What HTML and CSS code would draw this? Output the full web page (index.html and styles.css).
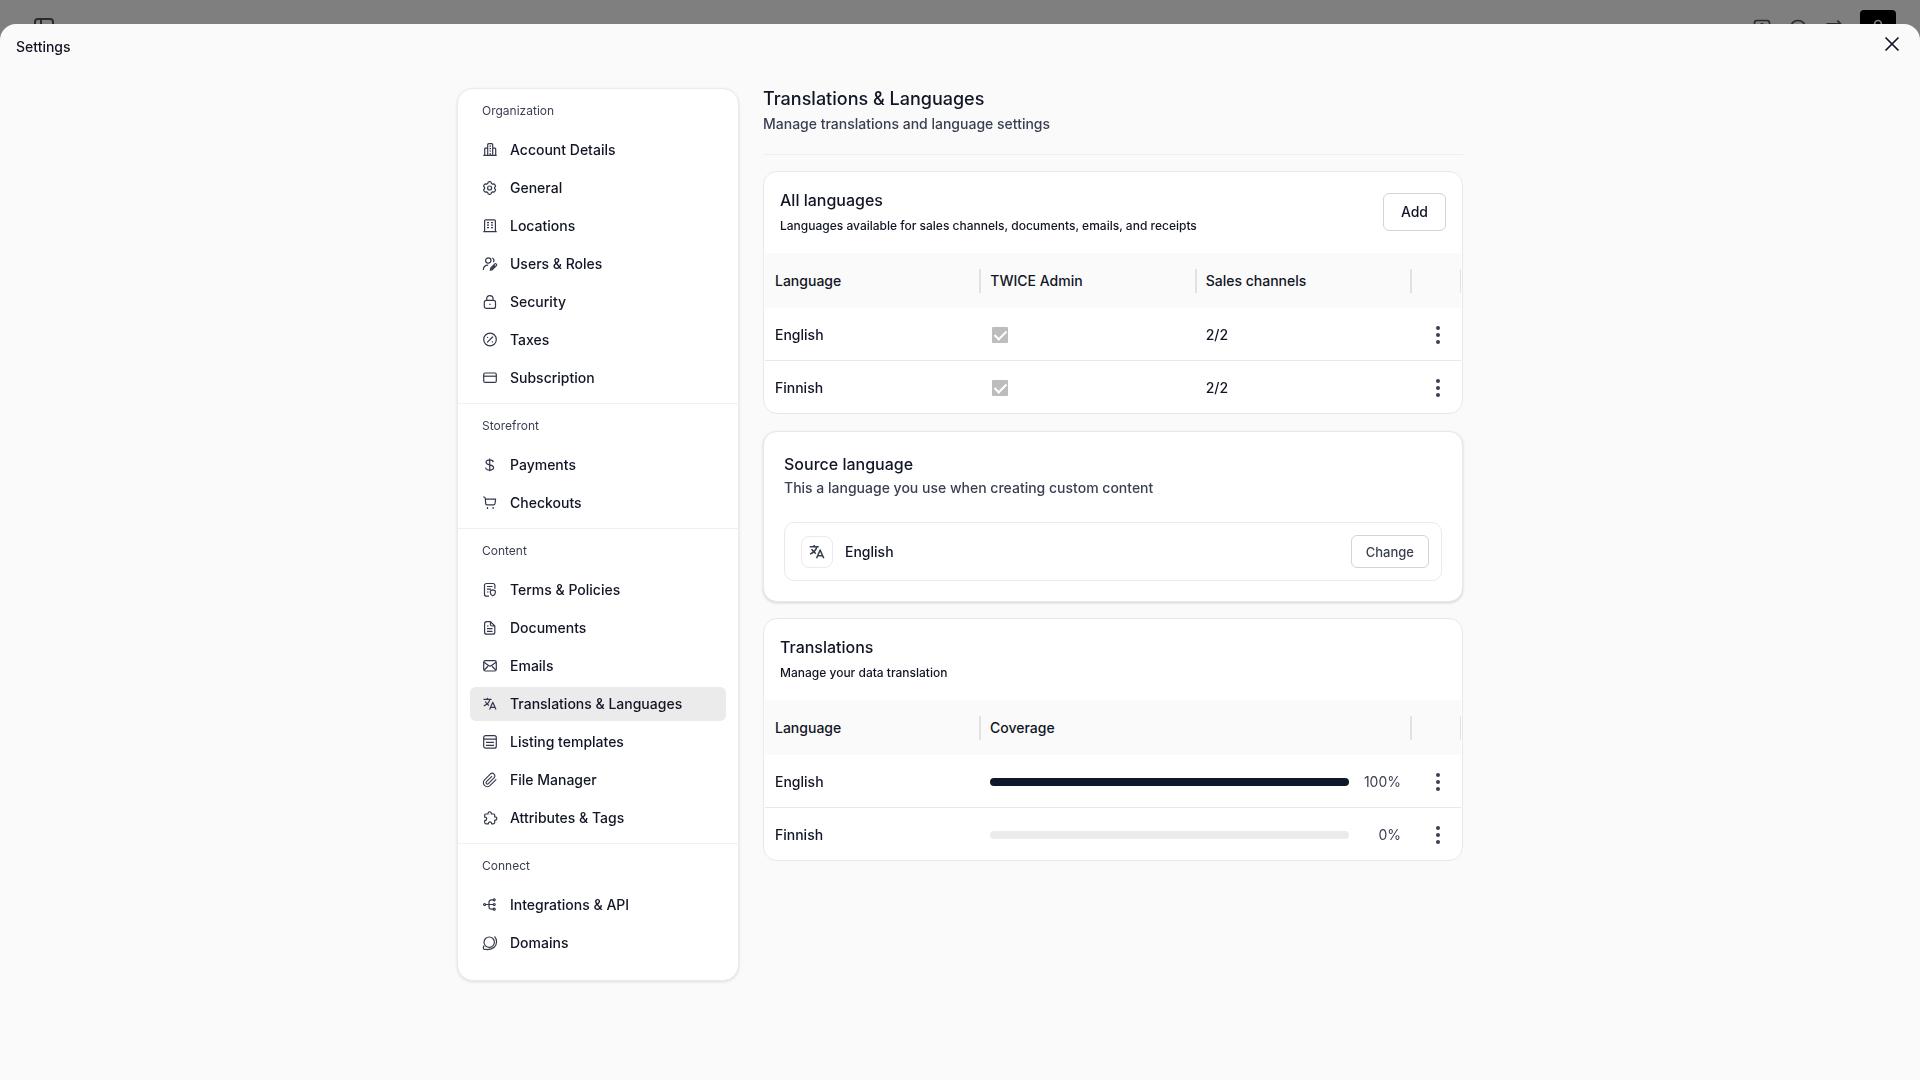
FILE: index.html
```html
<!DOCTYPE html>
<html lang="en">
  <head>
    <meta charset="utf-8">
    <meta name="viewport" content="width=device-width, initial-scale=1">
    <title>Settings - Translations &amp; Languages</title>
    <link rel="stylesheet" href="styles.css">
  </head>
  <body>
    <svg class="sprite" aria-hidden="true">
      <symbol id="translate" viewBox="0 0 16 16">
        <path d="M1.5 3.4h8M5.5 1.8v1.6M7.9 3.4C7.2 6 5 8.6 1.8 9.9M3.3 5.4c.8 1.7 2 3 3.7 4M7.6 13.6l3.2-7.4 3.2 7.4M8.6 11.4H13"/>
      </symbol>
      <symbol id="dots" viewBox="0 0 24 24">
        <circle cx="12" cy="5" r="2"/>
        <circle cx="12" cy="12" r="2"/>
        <circle cx="12" cy="19" r="2"/>
      </symbol>
    </svg>

    <header class="topbar">
      <button class="icon-btn" aria-label="Toggle sidebar">
        <svg width="24" height="24" viewBox="0 0 24 24"><rect x="3" y="3" width="18" height="18" rx="3"/><path d="M9 3v18"/></svg>
      </button>
      <div class="topbar-actions">
        <button class="icon-btn" aria-label="Contacts">
          <svg width="20" height="20" viewBox="0 0 24 24"><rect x="3" y="3" width="18" height="18" rx="3"/><circle cx="12" cy="9" r="2"/><path d="M8 17c0-3 8-3 8 0"/></svg>
        </button>
        <button class="icon-btn" aria-label="Help">
          <svg width="20" height="20" viewBox="0 0 24 24"><circle cx="12" cy="12" r="9"/><path d="M12 8v.5M12 12v4"/></svg>
        </button>
        <button class="icon-btn" aria-label="Switch">
          <svg width="20" height="20" viewBox="0 0 24 24"><path d="M3 7h17M16 3l4 4-4 4M21 17H4M8 13l-4 4 4 4"/></svg>
        </button>
        <button class="account-btn" aria-label="Account">
          <svg width="20" height="20" viewBox="0 0 24 24"><circle cx="12" cy="7" r="4"/><path d="M5 21c0-8 14-8 14 0"/></svg>
        </button>
      </div>
    </header>

    <div class="backdrop"></div>

    <div class="modal" role="dialog" aria-labelledby="modal-title">
      <header class="modal-header">
        <h1 id="modal-title">Settings</h1>
        <button class="close" aria-label="Close">
          <svg width="24" height="24" viewBox="0 0 24 24"><path d="M5.500 5.500l13 13M18.500 5.500l-13 13"/></svg>
        </button>
      </header>

      <div class="layout">
        <nav class="sidebar">
          <section>
            <h2>Organization</h2>
            <a href="#account">
              <svg viewBox="0 0 16 16"><path d="M1.300 13.300h13.400M5.700 13.300V2.700c0-.6.3-1 1-1h3c.6 0 1 .4 1 1v10.600M5.700 6.200H3.500c-.5 0-.8.3-.8.8v6.300M10.700 6.200h2c.6 0 1 .3 1 .8v6.300M7.500 4.200h1.500M7.500 6.600h1.500M7.500 9h1.500M8.200 11v2.300"/></svg>
              Account Details
            </a>
            <a href="#general">
              <svg viewBox="0 0 16 16"><circle cx="7.600" cy="8" r="2"/><path d="M6.200 2.100c.9-.5 1.900-.5 2.800 0l.5 1.400 1.100.6 1.500-.2c.9.6 1.400 1.400 1.500 2.400l-1 1.100v1.200l1 1.100c-.1 1-.6 1.800-1.500 2.400l-1.500-.2-1.100.6L9 13.900c-.9.5-1.900.5-2.800 0l-.5-1.400-1.100-.6-1.500.2c-.9-.6-1.400-1.400-1.500-2.400l1-1.100V7.400l-1-1.100c.1-1 .6-1.800 1.500-2.400l1.500.2 1.100-.6z"/></svg>
              General
            </a>
            <a href="#locations">
              <svg viewBox="0 0 16 16"><path d="M1.300 13.600h13.400M2.600 13.600V3c0-.7.4-1.100 1.100-1.100h8.600c.7 0 1.100.4 1.100 1.100v10.600"/><path d="M5 4.700h2M9 4.700h2M5 7.200h2M9 7.200h2M5 9.700h2M9 9.700h2"/></svg>
              Locations
            </a>
            <a href="#users">
              <svg viewBox="0 0 16 16"><circle cx="6.300" cy="4.500" r="2.700"/><path d="M1.300 14c0-3.300 2-5 4.900-4.900M10.300 2c1.500.8 2 2.500 1.200 4.200M8.300 14.300l.5-2.400 4-4c1-.8 2.500.7 1.600 1.700l-4 4zM9.500 12.800l3.500-3.500"/></svg>
              Users &amp; Roles
            </a>
            <a href="#security">
              <svg viewBox="0 0 16 16"><rect x="2.300" y="6.400" width="11.200" height="8" rx="2"/><path d="M4.700 6.400V5c0-4.400 6.400-4.400 6.400 0v1.400M7.900 9.700v1.400"/></svg>
              Security
            </a>
            <a href="#taxes">
              <svg viewBox="0 0 16 16"><circle cx="8" cy="7.500" r="6.300"/><path d="M5.400 10.200l5.200-5.200M5.600 5.300v.2M10.300 9.700v.2" stroke-linecap="round"/></svg>
              Taxes
            </a>
            <a href="#subscription">
              <svg viewBox="0 0 16 16"><rect x="1.700" y="3" width="12.600" height="9.400" rx="1.500"/><path d="M1.700 6.200h12.600"/></svg>
              Subscription
            </a>
          </section>
          <section>
            <h2>Storefront</h2>
            <a href="#payments">
              <svg viewBox="0 0 16 16"><path d="M11.300 5.200C10.900 2.100 4 2.100 4 5.200c0 3.400 7.600 1.900 7.600 5.300 0 3.400-7.600 3.400-8 0M7.700 1.500v12.800"/></svg>
              Payments
            </a>
            <a href="#checkouts">
              <svg viewBox="0 0 16 16"><path d="M1.300 1.800l1.200.5c.6.300.8.700.8 1.300l.4 5c.1.900.5 1.300 1.400 1.300h6.500c.8 0 1.200-.4 1.400-1.200l.6-4.600H3.400"/><path d="M4.900 13h1.200M10.500 13h1.200" stroke-width="1.800"/></svg>
              Checkouts
            </a>
          </section>
          <section>
            <h2>Content</h2>
            <a href="#terms">
              <svg viewBox="0 0 16 16"><path d="M7 14.200H4.500c-1.200 0-2-.8-2-2V3.500c0-1.200.8-2 2-2h6.400c1.200 0 2 .8 2 2v3.300M5 4.500h5.500M5 7.200h4M5 10h1.500M10.800 7.900l2.500.9v2c0 1.500-1 2.400-2.500 3-1.500-.6-2.400-1.500-2.400-3v-2z"/></svg>
              Terms &amp; Policies
            </a>
            <a href="#documents">
              <svg viewBox="0 0 16 16"><path d="M8.500 1.700H4.600c-1.200 0-2 .8-2 2v8.500c0 1.200.8 2 2 2h6.200c1.200 0 2-.8 2-2V6zM8.500 1.700V4.500c0 1 .5 1.500 1.500 1.500h2.800M5 6h1.500M5 8.700h5.500M5 11.300h5.500"/></svg>
              Documents
            </a>
            <a href="#emails">
              <svg viewBox="0 0 16 16"><rect x="1.700" y="2.600" width="12.600" height="10.400" rx="1.800"/><path d="M2 4.200l4.500 3.300c1 .7 2 .7 3 0L14 4.200M2.200 12l3.800-3.700M13.800 12L10 8.300"/></svg>
              Emails
            </a>
            <a class="active" href="#translations" aria-current="page">
              <svg><use href="#translate"/></svg>
              Translations &amp; Languages
            </a>
            <a href="#templates">
              <svg viewBox="0 0 16 16"><rect x="1.700" y="1.600" width="12.600" height="12.600" rx="2"/><path d="M1.700 5.100h12.600M4 8.300h8M4 11.300h8"/></svg>
              Listing templates
            </a>
            <a href="#files">
              <svg viewBox="0 0 24 24"><path stroke-width="1.700" d="M21.400 11.100l-9.100 9.100a6 6 0 0 1-8.500-8.500l8.600-8.600a4 4 0 0 1 5.700 5.700l-8.600 8.600a2 2 0 0 1-2.800-2.900l8.500-8.400"/></svg>
              File Manager
            </a>
            <a href="#attributes">
              <svg viewBox="0 0 16 16"><path d="M3.600 4h2.500C5.500 1 9.900 1 9.300 4h2.500c.6 0 .9.300.9.900v2c2.800-.5 2.800 3.700 0 3.200v2.500c0 .8-.4 1.200-1.200 1.200H9.600c.2-2.600-3.400-2.600-3.200 0H3.900c-.8 0-1.200-.4-1.200-1.200v-2.200c2.600.3 2.600-3.600 0-3.300V5c0-.7.300-1 .9-1z"/></svg>
              Attributes &amp; Tags
            </a>
          </section>
          <section>
            <h2>Connect</h2>
            <a href="#integrations">
              <svg viewBox="0 0 16 16"><circle cx="2.600" cy="7.500" r="1"/><circle cx="12.200" cy="2.800" r="1"/><circle cx="12.200" cy="7.500" r="1"/><circle cx="12.200" cy="12.200" r="1"/><path d="M3.600 7.500h7.600M11.200 2.800H9.500c-1.500 0-2.500.8-2.500 2.200v5c0 1.400 1 2.200 2.500 2.200h1.700"/></svg>
              Integrations &amp; API
            </a>
            <a href="#domains">
              <svg viewBox="0 0 16 16"><circle cx="7.200" cy="7.200" r="5.200"/><path d="M12.500 1.400c2.900 3.300 2.700 8.200-.3 10.900-2.700 2.400-6.500 2.700-10.700 1.800M1.500 14.100c-.3-1.200-.2-2.200.6-3.400"/></svg>
              Domains
            </a>
          </section>
        </nav>

        <main>
          <header class="page-header">
            <h2>Translations &amp; Languages</h2>
            <p>Manage translations and language settings</p>
          </header>

          <section class="card">
            <header class="card-header">
              <div>
                <h3>All languages</h3>
                <p>Languages available for sales channels, documents, emails, and receipts</p>
              </div>
              <button class="btn">Add</button>
            </header>
            <div class="table-wrap">
              <table>
                <thead>
                  <tr>
                    <th>Language</th>
                    <th>TWICE Admin</th>
                    <th>Sales channels</th>
                    <th class="actions"></th>
                  </tr>
                </thead>
                <tbody>
                  <tr>
                    <td>English</td>
                    <td><input type="checkbox" aria-label="English in TWICE Admin" checked disabled></td>
                    <td>2/2</td>
                    <td class="actions"><button class="menu" aria-label="English actions"><svg><use href="#dots"/></svg></button></td>
                  </tr>
                  <tr>
                    <td>Finnish</td>
                    <td><input type="checkbox" aria-label="Finnish in TWICE Admin" checked disabled></td>
                    <td>2/2</td>
                    <td class="actions"><button class="menu" aria-label="Finnish actions"><svg><use href="#dots"/></svg></button></td>
                  </tr>
                </tbody>
              </table>
            </div>
          </section>

          <section class="card source">
            <h3>Source language</h3>
            <p>This a language you use when creating custom content</p>
            <div class="source-row">
              <span class="source-icon"><svg><use href="#translate"/></svg></span>
              <span class="source-name">English</span>
              <button class="btn btn-small">Change</button>
            </div>
          </section>

          <section class="card">
            <header class="card-header">
              <div>
                <h3>Translations</h3>
                <p>Manage your data translation</p>
              </div>
            </header>
            <div class="table-wrap">
              <table>
                <thead>
                  <tr>
                    <th>Language</th>
                    <th class="wide">Coverage</th>
                    <th class="actions"></th>
                  </tr>
                </thead>
                <tbody>
                  <tr>
                    <td>English</td>
                    <td>
                      <div class="coverage">
                        <progress max="100" value="100" aria-label="English coverage"></progress>
                        <span>100%</span>
                      </div>
                    </td>
                    <td class="actions"><button class="menu" aria-label="English translation actions"><svg><use href="#dots"/></svg></button></td>
                  </tr>
                  <tr>
                    <td>Finnish</td>
                    <td>
                      <div class="coverage">
                        <progress max="100" value="0" aria-label="Finnish coverage"></progress>
                        <span>0%</span>
                      </div>
                    </td>
                    <td class="actions"><button class="menu" aria-label="Finnish translation actions"><svg><use href="#dots"/></svg></button></td>
                  </tr>
                </tbody>
              </table>
            </div>
          </section>
        </main>
      </div>
    </div>
  </body>
</html>
```
FILE: styles.css
```css
* {
  box-sizing: border-box;
}

body {
  margin: 0;
  font-family: Inter, "Liberation Sans", sans-serif;
  font-size: 14px;
  font-weight: 500;
  line-height: 20px;
  color: #111525;
  background: #fff;
}

h1,
h2,
h3,
p {
  margin: 0;
  font-size: 14px;
  font-weight: 500;
}

button {
  padding: 0;
  border: 0;
  background: none;
  font: inherit;
  color: inherit;
  cursor: pointer;
}

svg {
  display: block;
  fill: none;
  stroke: currentColor;
  stroke-linejoin: round;
}

.sprite {
  display: none;
}

/* app bar behind the dialog */
.topbar {
  display: flex;
  align-items: center;
  justify-content: space-between;
  height: 56px;
  padding: 0 24px 0 32px;
  color: #555;
}

.topbar svg {
  stroke-width: 2;
}

.topbar-actions {
  display: flex;
  align-items: center;
  gap: 16px;
}

.account-btn {
  display: grid;
  place-items: center;
  width: 36px;
  height: 36px;
  border-radius: 4px;
  background: #000;
  color: #fff;
}

.backdrop {
  position: fixed;
  inset: 0;
  background: rgba(0, 0, 0, 0.5);
}

.modal {
  position: fixed;
  inset: 24px 0 0;
  overflow: auto;
  border-radius: 16px 16px 0 0;
  background: #fafafa;
}

.modal-header {
  display: flex;
  align-items: flex-start;
  justify-content: space-between;
  height: 44px;
  padding: 8px 16px 0;
}

.modal-header h1 {
  padding-top: 5px;
}

.close svg {
  stroke-width: 1.7;
}

.layout {
  display: flex;
  align-items: flex-start;
  justify-content: center;
  gap: 24px;
  padding: 20px 16px;
}

.sidebar {
  flex: 0 0 282px;
  border: 1px solid #ebebeb;
  border-radius: 16px;
  background: #fff;
  box-shadow: 0 1px 3px rgba(0, 0, 0, 0.12);
}

.sidebar section {
  display: flex;
  flex-direction: column;
  gap: 4px;
  padding: 12px 12px 8px;
}

.sidebar section + section {
  border-top: 1px solid #eef0f2;
}

.sidebar section:last-child {
  padding-bottom: 20px;
}

.sidebar h2 {
  margin-bottom: 8px;
  padding: 0 12px;
  font-size: 12px;
  font-weight: 400;
  color: #3a3f52;
}

.sidebar a {
  display: flex;
  align-items: center;
  gap: 12px;
  height: 34px;
  padding: 0 12px;
  border-radius: 6px;
  color: inherit;
  text-decoration: none;
}

.sidebar a.active {
  background: #ebebeb;
}

.sidebar svg {
  width: 16px;
  height: 16px;
  color: #33384c;
  stroke-width: 1.2;
}

main {
  display: flex;
  flex-direction: column;
  flex: 0 1 700px;
  gap: 16px;
  min-width: 0;
}

.page-header {
  padding-bottom: 20px;
  border-bottom: 1px solid #eee;
}

.page-header h2 {
  font-size: 18px;
  line-height: 22px;
}

.page-header p {
  margin-top: 4px;
  color: #3a3f52;
}

.card {
  border: 1px solid #e8e8e8;
  border-radius: 14px;
  background: #fff;
  overflow: hidden;
}

.card h3 {
  font-size: 16px;
  line-height: 24px;
}

.card-header {
  display: flex;
  align-items: center;
  justify-content: space-between;
  height: 81px;
  padding: 0 16px 2px;
}

.card-header p {
  margin-top: 4px;
  font-size: 12px;
}

.btn {
  height: 38px;
  padding: 0 17px;
  border: 1px solid #d4d4d4;
  border-radius: 6px;
  background: #fff;
}

.btn-small {
  height: 33px;
  padding: 0 14px;
  font-size: 13px;
  color: #3a3f52;
}

.table-wrap {
  padding: 0 1px;
}

table {
  width: 100%;
  table-layout: fixed;
  border-collapse: separate;
  border-spacing: 0;
}

th,
td {
  height: 52px;
  padding: 2px 10px 0;
  text-align: left;
  font-weight: 500;
}

th {
  position: relative;
  height: 55px;
  padding-top: 0;
  background: #fafafa;
}

/* column resize handle */
th::after {
  content: "";
  position: absolute;
  top: 16px;
  right: -1px;
  z-index: 1;
  width: 2px;
  height: 24px;
  background: #e2e2e2;
}

th:last-child::after {
  right: 0;
  width: 1px;
}

tbody tr + tr td {
  border-top: 1px solid #e8e8e8;
  height: 53px;
}

.wide {
  width: 431px;
}

.actions {
  width: 50px;
  padding: 2px 10px 0 15px;
}

.menu {
  display: block;
}

.menu svg {
  width: 24px;
  height: 24px;
  fill: #3a3f52;
  stroke: none;
}

td input {
  display: grid;
  place-items: center;
  appearance: none;
  width: 16px;
  height: 16px;
  margin: 0 2px;
  border-radius: 1px;
  background: #bdbdbd;
}

td input:checked::after {
  content: "";
  width: 5px;
  height: 10px;
  margin-bottom: 3px;
  border: solid #fff;
  border-width: 0 2px 2px 0;
  transform: rotate(45deg);
}

.source {
  margin-top: 1px;
  padding: 20px;
  box-shadow: 0 1px 3px rgba(0, 0, 0, 0.16);
}

.source p {
  margin-top: 2px;
  color: #3a3f52;
}

.source-row {
  display: flex;
  align-items: center;
  gap: 12px;
  margin-top: 24px;
  padding: 12px 12px 12px 16px;
  border: 1px solid #e8eaec;
  border-radius: 10px;
}

.source-icon {
  display: grid;
  place-items: center;
  width: 32px;
  height: 32px;
  border: 1px solid #ebebeb;
  border-radius: 8px;
  color: #3a3f52;
}

.source-icon svg {
  width: 18px;
  height: 18px;
  stroke-width: 1.4;
}

.source-name {
  flex: 1;
}

.coverage {
  display: flex;
  align-items: center;
  color: #3a3f52;
  font-weight: 400;
}

.coverage span {
  flex: 0 0 52px;
  text-align: right;
}

progress {
  appearance: none;
  display: block;
  flex: 1;
  width: 100%;
  height: 8px;
  border: 0;
  border-radius: 4px;
  background: #ebebed;
  overflow: hidden;
}

progress::-webkit-progress-bar {
  background: #ebebed;
}

progress::-webkit-progress-value {
  background: #0f172a;
}
```
